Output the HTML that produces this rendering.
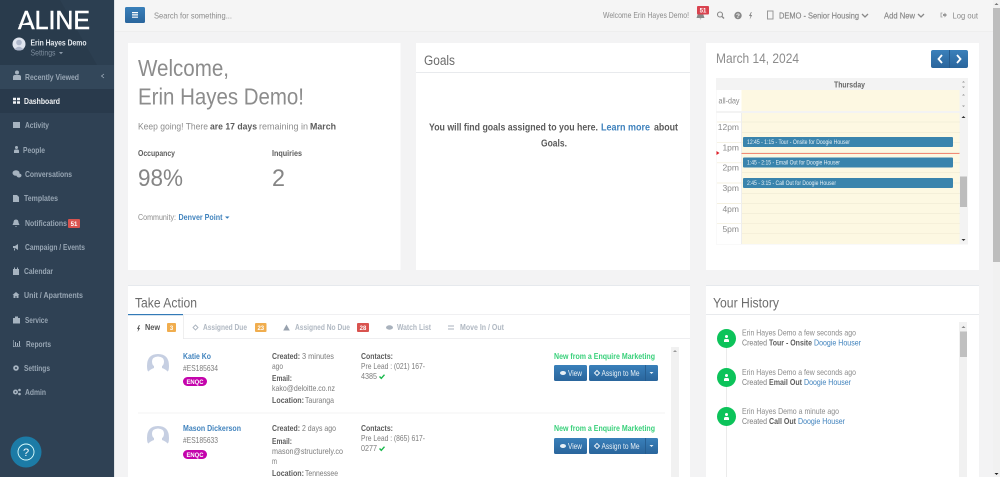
<!DOCTYPE html>
<html><head><meta charset="utf-8"><title>Dashboard</title>
<style>
html,body{margin:0;padding:0;width:1000px;height:477px;overflow:hidden;background:#f3f3f4}
svg{display:block;position:absolute;left:0;top:0}
text{font-family:"Liberation Sans",sans-serif;white-space:pre}
.n{font-size:8.5px;font-weight:bold;fill:#98a6b4}
.t{font-size:8.5px;fill:#8c8c8c}
.b{font-size:8.5px;fill:#7c7c7c}
.bb{font-size:8.5px;font-weight:bold;fill:#5c5c5c}
.l{font-size:8.5px;font-weight:bold;fill:#3f82bd}
.h{font-size:13.500px;fill:#6c6c6c}
.tab{font-size:8.5px;font-weight:bold;fill:#b0b8c2}
.bd{font-size:6px;font-weight:bold;fill:#fff;text-anchor:middle}
.w{font-size:8.5px;fill:#e8f0f6}
.g{font-size:8.5px;font-weight:bold;fill:#38d07a}
.ti{font-size:8.5px;fill:#8c8c8c;text-anchor:end}
.ic{fill:#a6b3c0}
</style></head><body>
<svg width="1000" height="477" viewBox="0 0 1000 477" xmlns="http://www.w3.org/2000/svg">
<defs>
<linearGradient id="btn" x1="0" y1="0" x2="0" y2="1"><stop offset="0" stop-color="#3a80ba"/><stop offset="1" stop-color="#2a659c"/></linearGradient>
</defs>
<!-- top bar -->
<rect x="115" y="0" width="885" height="31" fill="#f5f5f5"/>
<rect x="115" y="31" width="885" height="1" fill="#eeeeee"/>
<!-- sidebar -->
<rect x="0" y="0" width="115" height="477" fill="#2f4154"/>
<rect x="114" y="0" width="1" height="477" fill="#dfe3e6"/>
<rect x="0" y="0" width="114" height="65" fill="#293b4c"/>
<path d="M60 0H114V65H97Z" fill="#2c3f51"/>
<rect x="0" y="65" width="114" height="24" fill="#33475a"/>
<rect x="0" y="89" width="114" height="24" fill="#293a4c"/>
<!-- logo -->
<text x="18" y="29" font-size="26" fill="#fff" stroke="#fff" stroke-width=".5" textLength="72" lengthAdjust="spacingAndGlyphs">ΛLINE</text>
<path d="M18 25L32 21.500V25Z" fill="#fff"/>
<!-- user -->
<circle cx="19" cy="44" r="6.500" fill="#dfe4ee"/>
<circle cx="19" cy="42.500" r="2.800" fill="#aeb8cc"/>
<path d="M14.500 49.500Q19 44 23.500 49.500Q19 51.500 14.500 49.500Z" fill="#aeb8cc"/>
<text x="30.500" y="45.500" font-size="8" font-weight="bold" fill="#e6ebf0" textLength="56" lengthAdjust="spacingAndGlyphs">Erin Hayes Demo</text>
<text x="30.500" y="55.500" font-size="8" fill="#7c8c9c" textLength="25" lengthAdjust="spacingAndGlyphs">Settings</text>
<path d="M59 52h4l-2 2.200z" fill="#8b9aa9"/>
<!-- nav -->
<g>
<text class="n" x="25" y="80" textLength="54" lengthAdjust="spacingAndGlyphs">Recently Viewed</text>
<path d="M104 74l-2.500 2 2.500 2" fill="none" stroke="#9fadbb" stroke-width=".8"/>
<text class="n" style="fill:#f2f4f6" x="24" y="104" textLength="36" lengthAdjust="spacingAndGlyphs">Dashboard</text>
<text class="n" x="25" y="128" textLength="24" lengthAdjust="spacingAndGlyphs">Activity</text>
<text class="n" x="23" y="153" textLength="22" lengthAdjust="spacingAndGlyphs">People</text>
<text class="n" x="25" y="177" textLength="47" lengthAdjust="spacingAndGlyphs">Conversations</text>
<text class="n" x="24" y="201" textLength="34" lengthAdjust="spacingAndGlyphs">Templates</text>
<text class="n" x="25" y="226" textLength="42" lengthAdjust="spacingAndGlyphs">Notifications</text>
<rect x="68" y="219" width="12" height="9" rx="1" fill="#d9534f"/>
<text class="bd" x="74" y="226">51</text>
<text class="n" x="25" y="250" textLength="60" lengthAdjust="spacingAndGlyphs">Campaign / Events</text>
<text class="n" x="24" y="274" textLength="29" lengthAdjust="spacingAndGlyphs">Calendar</text>
<text class="n" x="24" y="298" textLength="59" lengthAdjust="spacingAndGlyphs">Unit / Apartments</text>
<text class="n" x="25" y="323" textLength="23" lengthAdjust="spacingAndGlyphs">Service</text>
<text class="n" x="26" y="347" textLength="25" lengthAdjust="spacingAndGlyphs">Reports</text>
<text class="n" x="24" y="371" textLength="26" lengthAdjust="spacingAndGlyphs">Settings</text>
<text class="n" x="25" y="395" textLength="21" lengthAdjust="spacingAndGlyphs">Admin</text>
</g>
<!-- nav icons -->
<g class="ic">
<path d="M13 80v-3q0-2 2-2h4q2 0 2 2v3zM15 72.500a2 2 0 1 0 4 0a2 2 0 1 0-4 0z"/>
<path style="fill:#f2f4f6" d="M13 98h3v2.500h-3zM17 98h3v2.500h-3zM13 101.500h3v2.500h-3zM17 101.500h3v2.500h-3z" transform="translate(0,-.200)"/>
<path d="M13 122h7v6h-7z"/>
<path d="M14 153v-2q0-1.500 1.500-1.500h2q1.500 0 1.500 1.500v2zM15 147.500a1.500 1.500 0 1 0 3 0a1.500 1.500 0 1 0-3 0z"/>
<ellipse cx="16" cy="173" rx="3.500" ry="2.800"/><ellipse cx="19" cy="175.500" rx="2.500" ry="2"/>
<path d="M13 195h4l2 2v5h-6z"/>
<path d="M16 219.500q2.500 0 2.500 3l1 2.500h-7l1-2.500q0-3 2.500-3zM15 226h2l-1 1z"/>
<path d="M13 246h2l3-2v6l-3-2h-2zM14 248.500h1v2h-1z"/>
<path d="M13 269h6v6h-6zM14 267.500h1v1.500h-1zM17 267.500h1v1.500h-1z"/>
<path d="M16 292l3.500 3h-1v3h-2v-2h-1v2h-2v-3h-1z"/>
<path d="M13 318h7v5.500h-7zM15 316.500h3v1.500h-3z"/>
<path d="M13 340h.6v6.400h7v.6H13zM15 342h1v4h-1zM17 343h1v3h-1zM19 341h1v5h-1z"/>
<circle cx="16" cy="368" r="2.800"/>
<circle cx="15.500" cy="392" r="2.500"/><circle cx="19.500" cy="390" r="1.300"/><circle cx="19.500" cy="394" r="1.300"/>
</g>
<circle cx="16" cy="368" r="1" fill="#2f4154"/>
<circle cx="15.500" cy="392" r=".9" fill="#2f4154"/>
<!-- help -->
<circle cx="26" cy="452" r="15.500" fill="#1c7ba6"/>
<circle cx="26" cy="452" r="8" fill="none" stroke="#dff" stroke-width=".9"/>
<text x="26" y="456" font-size="11" fill="#fff" text-anchor="middle">?</text>
<!-- hamburger -->
<rect x="125" y="7" width="20" height="16" rx="1.500" fill="url(#btn)"/>
<path d="M132 12h6v1.200h-6zM132 14.300h6v1.200h-6zM132 16.600h6v1.200h-6z" fill="#fff"/>
<text class="t" x="154" y="18.500" textLength="78" lengthAdjust="spacingAndGlyphs">Search for something...</text>
<!-- top right -->
<text class="t" x="603" y="18" textLength="86" lengthAdjust="spacingAndGlyphs">Welcome Erin Hayes Demo!</text>
<path d="M700.500 12q3 0 3 3l1 3h-8l1-3q0-3 3-3zM699.500 18.500h2l-1 1z" fill="#888"/>
<rect x="697" y="6" width="12" height="8.500" rx="1" fill="#d9434f"/>
<text class="bd" x="703" y="12.700">51</text>
<circle cx="720" cy="14.500" r="2.500" fill="none" stroke="#888" stroke-width="1.100"/>
<path d="M722 16.500l2 2" stroke="#888" stroke-width="1.300"/>
<circle cx="738" cy="15.500" r="3.700" fill="#888"/>
<text x="738" y="18" font-size="6.500" font-weight="bold" fill="#f5f5f5" text-anchor="middle">?</text>
<path d="M751 12l-2 4h1.500l-.8 3.500 2.500-4.500h-1.500l1-3z" fill="#888"/>
<rect x="767.500" y="11" width="5.500" height="8" fill="none" stroke="#999" stroke-width="1"/>
<text x="779" y="18.500" font-size="8.500" fill="#858585" stroke="#858585" stroke-width=".15" textLength="80" lengthAdjust="spacingAndGlyphs">DEMO - Senior Housing</text>
<path d="M862 14l3 3 3-3" fill="none" stroke="#888" stroke-width="1.300"/>
<text x="884" y="18.500" font-size="8.500" fill="#858585" stroke="#858585" stroke-width=".15" textLength="31" lengthAdjust="spacingAndGlyphs">Add New</text>
<path d="M918 14l3 3 3-3" fill="none" stroke="#888" stroke-width="1.300"/>
<path d="M943 14h1.500v-1.500l2.500 2.500-2.500 2.500v-1.500h-1.500z" fill="#999"/>
<path d="M942.500 13h-1.500v4h1.500" fill="none" stroke="#999" stroke-width=".8"/>
<text class="t" x="952.500" y="18.500" textLength="25.500" lengthAdjust="spacingAndGlyphs">Log out</text>
<!-- page scrollbar -->
<rect x="993" y="0" width="7" height="477" fill="#f1f1f1"/>
<rect x="993" y="8" width="7" height="254" fill="#bdbdbd"/>
<path d="M996.500 3l-2 2h4z" fill="#777"/>
<path d="M996.500 475l-2-2h4z" fill="#222"/>
<!-- cards -->
<rect x="128" y="43" width="272.500" height="227" fill="#fff"/>
<rect x="416" y="43" width="274" height="227" fill="#fff"/>
<rect x="706" y="43" width="273" height="227" fill="#fff"/>
<rect x="128" y="286" width="562" height="191" fill="#fff"/>
<rect x="706" y="286" width="273" height="191" fill="#fff"/>
<rect x="128" y="285" width="562" height="1" fill="#e6e9ed"/>
<rect x="706" y="285" width="273" height="1" fill="#e6e9ed"/>
<!-- welcome -->
<text x="138" y="76" font-size="23" fill="#8c8c8c" textLength="91" lengthAdjust="spacingAndGlyphs">Welcome,</text>
<text x="138" y="104.500" font-size="23" fill="#8c8c8c" textLength="166" lengthAdjust="spacingAndGlyphs">Erin Hayes Demo!</text>
<text x="138" y="129.500" font-size="9.500" fill="#8c8c8c" textLength="70" lengthAdjust="spacingAndGlyphs">Keep going! There</text>
<text x="210" y="129.500" font-size="9.500" font-weight="bold" fill="#5c5c5c" textLength="47" lengthAdjust="spacingAndGlyphs">are 17 days</text>
<text x="259" y="129.500" font-size="9.500" fill="#8c8c8c" textLength="49" lengthAdjust="spacingAndGlyphs">remaining in</text>
<text x="310" y="129.500" font-size="9.500" font-weight="bold" fill="#5c5c5c" textLength="26" lengthAdjust="spacingAndGlyphs">March</text>
<text class="bb" x="138" y="156" textLength="37" lengthAdjust="spacingAndGlyphs">Occupancy</text>
<text class="bb" x="272" y="156" textLength="30" lengthAdjust="spacingAndGlyphs">Inquiries</text>
<text x="138" y="186" font-size="24" fill="#858585" textLength="45" lengthAdjust="spacingAndGlyphs">98%</text>
<text x="272" y="186" font-size="24" fill="#858585" textLength="13" lengthAdjust="spacingAndGlyphs">2</text>
<text class="t" x="138" y="220" textLength="38" lengthAdjust="spacingAndGlyphs">Community:</text>
<text class="l" x="178.500" y="220" textLength="44" lengthAdjust="spacingAndGlyphs">Denver Point</text>
<path d="M225 216.500h4.500l-2.250 2.300z" fill="#337ab7"/>
<!-- goals -->
<text class="h" x="424" y="65" textLength="31" lengthAdjust="spacingAndGlyphs">Goals</text>
<rect x="416" y="72" width="274" height="1" fill="#e8eaed"/>
<text x="429" y="130.500" font-size="10" font-weight="bold" fill="#5c5c5c" textLength="169" lengthAdjust="spacingAndGlyphs">You will find goals assigned to you here.</text>
<text x="601" y="130.500" font-size="10" font-weight="bold" fill="#3f82bd" textLength="49" lengthAdjust="spacingAndGlyphs">Learn more</text>
<text x="654" y="130.500" font-size="10" font-weight="bold" fill="#5c5c5c" textLength="24" lengthAdjust="spacingAndGlyphs">about</text>
<text x="541" y="146.500" font-size="10" font-weight="bold" fill="#5c5c5c" textLength="26" lengthAdjust="spacingAndGlyphs">Goals.</text>
<!-- calendar -->
<text x="716" y="63" font-size="14" fill="#8c8c8c" textLength="83" lengthAdjust="spacingAndGlyphs">March 14, 2024</text>
<rect x="931" y="50" width="37" height="18" rx="2" fill="url(#btn)"/>
<rect x="949" y="50" width="1" height="18" fill="#245a8c"/>
<path d="M942 55l-3.500 4 3.500 4" fill="none" stroke="#fff" stroke-width="1.800"/>
<path d="M957 55l3.500 4-3.500 4" fill="none" stroke="#fff" stroke-width="1.800"/>
<rect x="716" y="78" width="252" height="166.500" fill="#f3f3f3"/>
<rect x="716.500" y="90" width="25" height="21" fill="#fff"/>
<rect x="741.500" y="90" width="218" height="21" fill="#fdf8e2"/>
<text x="834" y="87.500" font-size="8.500" font-weight="bold" fill="#666" textLength="31" lengthAdjust="spacingAndGlyphs">Thursday</text>
<text x="718.500" y="103.500" font-size="8.500" fill="#888" textLength="21" lengthAdjust="spacingAndGlyphs">all-day</text>
<rect x="716.500" y="113" width="25" height="131" fill="#fff"/>
<rect x="741.500" y="113" width="218" height="131" fill="#fdf8e2"/>
<g stroke="#f1ecd6" stroke-width=".7">
<path d="M717 122h243M742 132.500h218M717 142.300h243M742 152.500h218M717 162.800h243M742 172.500h218M717 183h243M742 193.500h218M717 203.500h243M742 213.500h218M717 223.700h243M742 233.700h218"/>
</g>
<rect x="741" y="113" width="1" height="131" fill="#eeeeee"/>
<text class="ti" x="739" y="130">12pm</text>
<text class="ti" x="739" y="150.500">1pm</text>
<text class="ti" x="739" y="170.500">2pm</text>
<text class="ti" x="739" y="191">3pm</text>
<text class="ti" x="739" y="212">4pm</text>
<text class="ti" x="739" y="232">5pm</text>
<rect x="741.500" y="153" width="218" height=".8" fill="#f0705a"/>
<path d="M716.500 151l3 2-3 2z" fill="#e0202a"/>
<rect x="743" y="137" width="210" height="10" rx="1" fill="#3a84ad"/>
<rect x="743" y="157.500" width="210" height="10" rx="1" fill="#3a84ad"/>
<rect x="743" y="178" width="210" height="10" rx="1" fill="#3a84ad"/>
<text class="w" style="font-size:6.800px" x="747" y="144.200" textLength="103" lengthAdjust="spacingAndGlyphs">12:45 - 1:15 - Tour - Onsite for Doogie Houser</text>
<text class="w" style="font-size:6.800px" x="747" y="164.500" textLength="93" lengthAdjust="spacingAndGlyphs">1:45 - 2:15 - Email Out for Doogie Houser</text>
<text class="w" style="font-size:6.800px" x="747" y="185" textLength="89" lengthAdjust="spacingAndGlyphs">2:45 - 3:15 - Call Out for Doogie Houser</text>
<rect x="960" y="176.500" width="7" height="30.500" fill="#bdbdbd"/>
<path d="M963.500 116l-2 2h4zM963.500 241l-2-2h4z" fill="#333"/>
<path d="M963.500 81l-1.500 1.500h3zM963.500 88l-1.500-1.500h3zM963.500 94l-1.500 1.500h3zM963.500 107l-1.500-1.500h3z" fill="#999"/>
<!-- take action -->
<text class="h" x="135" y="307.500" textLength="62" lengthAdjust="spacingAndGlyphs">Take Action</text>
<rect x="128" y="314" width="562" height="1" fill="#f0f0f2"/>
<rect x="128" y="338" width="562" height="1" fill="#eeeef0"/>
<rect x="128" y="314" width="55" height="25" fill="#fff"/>
<rect x="128" y="314" width="55" height="1.200" fill="#337ab7"/>
<rect x="183" y="315" width=".7" height="24" fill="#e8e8e8"/>
<path d="M139 325l-2 4h1.200l-.6 3 2.500-4h-1.300l1-3z" fill="#555"/>
<text class="tab" style="fill:#555" x="145" y="330" textLength="15" lengthAdjust="spacingAndGlyphs">New</text>
<rect x="167" y="323" width="9" height="9" rx="1" fill="#f0ad4e"/>
<text class="bd" x="171.500" y="330">3</text>
<path d="M195.500 325l2.500 2.500-2.500 2.500-2.500-2.500z" fill="none" stroke="#a9b2bd" stroke-width=".9"/>
<text class="tab" x="203" y="330" textLength="44" lengthAdjust="spacingAndGlyphs">Assigned Due</text>
<rect x="255" y="323" width="11.500" height="9" rx="1" fill="#f0ad4e"/>
<text class="bd" x="260.800" y="330">23</text>
<path d="M286.500 324.500l3.300 6h-6.600z" fill="#98a2ae"/>
<text class="tab" x="295" y="330" textLength="55" lengthAdjust="spacingAndGlyphs">Assigned No Due</text>
<rect x="357" y="323" width="12" height="9" rx="1" fill="#d9534f"/>
<text class="bd" x="363" y="330">28</text>
<ellipse cx="389.500" cy="327.500" rx="3.500" ry="2.200" fill="#a9b2bd"/>
<text class="tab" x="397" y="330" textLength="34" lengthAdjust="spacingAndGlyphs">Watch List</text>
<path d="M448 326h6M448 329h6" stroke="#a9b2bd" stroke-width="1"/>
<text class="tab" x="460" y="330" textLength="44" lengthAdjust="spacingAndGlyphs">Move In / Out</text>
<!-- row 1 -->
<path d="M147 366q0-12 11-12t11 12q0 5-1.500 5.500-1.500-2-5.500-3.500v-2q2-1 2-5t-6-4.500q-6 .5-6 4.500t2 5v2q-4 1.500-5.500 3.500-1.500-.500-1.500-5.500z" fill="#c6cfe2"/>
<text class="l" x="183" y="359" textLength="28" lengthAdjust="spacingAndGlyphs">Katie Ko</text>
<text class="b" x="183" y="371" textLength="35" lengthAdjust="spacingAndGlyphs">#ES185634</text>
<rect x="183" y="377" width="24" height="9" rx="4.500" fill="#c404ac"/>
<text class="bd" x="195" y="384" textLength="17" lengthAdjust="spacingAndGlyphs">ENQC</text>
<text class="bb" x="272" y="359" textLength="28" lengthAdjust="spacingAndGlyphs">Created:</text>
<text class="b" x="302" y="359" textLength="32" lengthAdjust="spacingAndGlyphs">3 minutes</text>
<text class="b" x="272" y="369" textLength="11" lengthAdjust="spacingAndGlyphs">ago</text>
<text class="bb" x="272" y="381" textLength="20" lengthAdjust="spacingAndGlyphs">Email:</text>
<text class="b" x="272" y="391" textLength="63" lengthAdjust="spacingAndGlyphs">kako@deloitte.co.nz</text>
<text class="bb" x="272" y="403" textLength="32" lengthAdjust="spacingAndGlyphs">Location:</text>
<text class="b" x="305" y="403" textLength="29" lengthAdjust="spacingAndGlyphs">Tauranga</text>
<text class="bb" x="361" y="359" textLength="32" lengthAdjust="spacingAndGlyphs">Contacts:</text>
<text class="b" x="361" y="369" textLength="64" lengthAdjust="spacingAndGlyphs">Pre Lead : (021) 167-</text>
<text class="b" x="361" y="379" textLength="16" lengthAdjust="spacingAndGlyphs">4385</text>
<path d="M379.500 376.500l1.800 1.800 3.200-3.600" fill="none" stroke="#19b84c" stroke-width="1.400"/>
<text class="g" x="554" y="359" textLength="101" lengthAdjust="spacingAndGlyphs">New from a Enquire Marketing</text>
<rect x="554" y="365" width="33" height="16" rx="1.500" fill="url(#btn)"/>
<rect x="589" y="365" width="69" height="16" rx="1.500" fill="url(#btn)"/>
<rect x="645" y="365" width=".8" height="16" fill="#245a8c"/>
<ellipse cx="563" cy="373" rx="3" ry="2" fill="#e8f0f6"/>
<text class="w" x="568" y="376" textLength="14" lengthAdjust="spacingAndGlyphs">View</text>
<path d="M597 370.500l2.500 2.500-2.500 2.500-2.500-2.500z" fill="none" stroke="#e8f0f6" stroke-width="1"/>
<text class="w" x="601.500" y="376" textLength="38" lengthAdjust="spacingAndGlyphs">Assign to Me</text>
<path d="M649.500 372h4l-2 2z" fill="#e8f0f6"/>
<rect x="138" y="412.500" width="527" height="1" fill="#f3f3f3"/>
<!-- row 2 -->
<path d="M147 438q0-12 11-12t11 12q0 5-1.500 5.500-1.500-2-5.500-3.500v-2q2-1 2-5t-6-4.500q-6 .5-6 4.500t2 5v2q-4 1.500-5.500 3.500-1.500-.500-1.500-5.500z" fill="#c6cfe2"/>
<text class="l" x="183" y="431" textLength="58" lengthAdjust="spacingAndGlyphs">Mason Dickerson</text>
<text class="b" x="183" y="443" textLength="35" lengthAdjust="spacingAndGlyphs">#ES185633</text>
<rect x="183" y="450" width="24" height="9" rx="4.500" fill="#c404ac"/>
<text class="bd" x="195" y="457" textLength="17" lengthAdjust="spacingAndGlyphs">ENQC</text>
<text class="bb" x="272" y="431" textLength="28" lengthAdjust="spacingAndGlyphs">Created:</text>
<text class="b" x="302" y="431" textLength="34" lengthAdjust="spacingAndGlyphs">2 days ago</text>
<text class="bb" x="272" y="444" textLength="20" lengthAdjust="spacingAndGlyphs">Email:</text>
<text class="b" x="272" y="454" textLength="71" lengthAdjust="spacingAndGlyphs">mason@structurely.co</text>
<text class="b" x="272" y="464" textLength="5" lengthAdjust="spacingAndGlyphs">m</text>
<text class="bb" x="272" y="476" textLength="32" lengthAdjust="spacingAndGlyphs">Location:</text>
<text class="b" x="305" y="476" textLength="33" lengthAdjust="spacingAndGlyphs">Tennessee</text>
<text class="bb" x="361" y="431" textLength="32" lengthAdjust="spacingAndGlyphs">Contacts:</text>
<text class="b" x="361" y="441" textLength="64" lengthAdjust="spacingAndGlyphs">Pre Lead : (865) 617-</text>
<text class="b" x="361" y="451" textLength="16" lengthAdjust="spacingAndGlyphs">0277</text>
<path d="M379.500 448.500l1.800 1.800 3.200-3.600" fill="none" stroke="#19b84c" stroke-width="1.400"/>
<text class="g" x="554" y="431" textLength="101" lengthAdjust="spacingAndGlyphs">New from a Enquire Marketing</text>
<rect x="554" y="438" width="33" height="16" rx="1.500" fill="url(#btn)"/>
<rect x="589" y="438" width="69" height="16" rx="1.500" fill="url(#btn)"/>
<rect x="645" y="438" width=".8" height="16" fill="#245a8c"/>
<ellipse cx="563" cy="446" rx="3" ry="2" fill="#e8f0f6"/>
<text class="w" x="568" y="449" textLength="14" lengthAdjust="spacingAndGlyphs">View</text>
<path d="M597 443.500l2.500 2.500-2.500 2.500-2.500-2.500z" fill="none" stroke="#e8f0f6" stroke-width="1"/>
<text class="w" x="601.500" y="449" textLength="38" lengthAdjust="spacingAndGlyphs">Assign to Me</text>
<path d="M649.500 445h4l-2 2z" fill="#e8f0f6"/>
<rect x="671" y="347" width="8" height="130" fill="#f1f1f1"/>
<path d="M675 350l-2 2h4z" fill="#999"/>
<!-- history -->
<text class="h" x="713" y="307.500" textLength="66" lengthAdjust="spacingAndGlyphs">Your History</text>
<rect x="706" y="314" width="273" height="1" fill="#e8eaed"/>
<rect x="726" y="338" width=".8" height="139" fill="#e6e6e6"/>
<g fill="#0cc35a"><circle cx="726.500" cy="338.500" r="9.500"/><circle cx="726.500" cy="377.500" r="9.500"/><circle cx="726.500" cy="416.500" r="9.500"/></g>
<g fill="#fff">
<path d="M724 342v-1.500q0-1.500 1.500-1.500h2q1.500 0 1.500 1.500v1.500zM725 336.500a1.500 1.500 0 1 0 3 0a1.500 1.500 0 1 0-3 0z"/>
<path d="M724 381v-1.500q0-1.500 1.500-1.500h2q1.500 0 1.500 1.500v1.500zM725 375.500a1.500 1.500 0 1 0 3 0a1.500 1.500 0 1 0-3 0z"/>
<path d="M724 420v-1.500q0-1.500 1.500-1.500h2q1.500 0 1.500 1.500v1.500zM725 414.500a1.500 1.500 0 1 0 3 0a1.500 1.500 0 1 0-3 0z"/>
</g>
<text class="t" x="742" y="335.500" textLength="114" lengthAdjust="spacingAndGlyphs">Erin Hayes Demo a few seconds ago</text>
<text class="b" x="742" y="345.500" textLength="25" lengthAdjust="spacingAndGlyphs">Created</text>
<text class="bb" x="769" y="345.500" textLength="43" lengthAdjust="spacingAndGlyphs">Tour - Onsite</text>
<text class="l" style="font-weight:normal" x="814" y="345.500" textLength="47" lengthAdjust="spacingAndGlyphs">Doogie Houser</text>
<text class="t" x="742" y="375" textLength="114" lengthAdjust="spacingAndGlyphs">Erin Hayes Demo a few seconds ago</text>
<text class="b" x="742" y="385" textLength="25" lengthAdjust="spacingAndGlyphs">Created</text>
<text class="bb" x="769" y="385" textLength="33" lengthAdjust="spacingAndGlyphs">Email Out</text>
<text class="l" style="font-weight:normal" x="804" y="385" textLength="47" lengthAdjust="spacingAndGlyphs">Doogie Houser</text>
<text class="t" x="742" y="414" textLength="97" lengthAdjust="spacingAndGlyphs">Erin Hayes Demo a minute ago</text>
<text class="b" x="742" y="424" textLength="25" lengthAdjust="spacingAndGlyphs">Created</text>
<text class="bb" x="769" y="424" textLength="27" lengthAdjust="spacingAndGlyphs">Call Out</text>
<text class="l" style="font-weight:normal" x="798" y="424" textLength="47" lengthAdjust="spacingAndGlyphs">Doogie Houser</text>
<rect x="959" y="322" width="8" height="155" fill="#f1f1f1"/>
<rect x="960" y="331.500" width="7" height="25.500" fill="#c0c0c0"/>
<path d="M963.500 326l-2 2h4z" fill="#888"/>
</svg>
</body></html>
